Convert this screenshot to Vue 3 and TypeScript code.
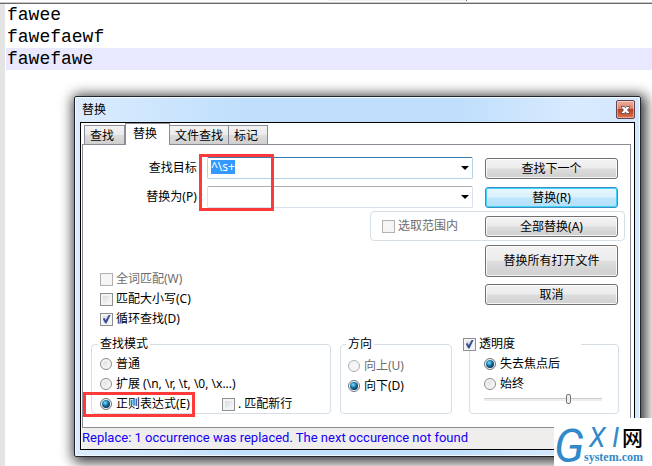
<script setup lang="ts">
import { onMounted, ref } from 'vue'

const lines = ['fawee', 'fawefaewf', 'fawefawe']
const activeLine = 2
const tabs = ['查找', '替换', '文件查找', '标记']
const activeTab = ref(1)

const findText = ref('^\\s+')
const replaceText = ref('')
const findBox = ref<HTMLInputElement | null>(null)

const options = ref([
  { id: 'whole', label: '全词匹配(W)', checked: false, disabled: true },
  { id: 'case', label: '匹配大小写(C)', checked: false, disabled: false },
  { id: 'wrap', label: '循环查找(D)', checked: true, disabled: false },
])

const modes = [
  { id: 'normal', label: '普通' },
  { id: 'extended', label: '扩展 (\\n, \\r, \\t, \\0, \\x...)' },
  { id: 'regex', label: '正则表达式(E)' },
]
const mode = ref('regex')
const newline = ref(false)
const direction = ref('down')
const transparent = ref(true)
const trigger = ref('blur')
const opacity = ref(73)

onMounted(() => {
  findBox.value?.focus()
  findBox.value?.select()
})
</script>

<template>
  <main class="editor">
    <div class="toolbar-edge"><span class="toolbar-piece"></span></div>
    <div class="code">
      <div v-for="(line, i) in lines" :key="i" class="line" :class="{ current: i === activeLine }">{{ line }}</div>
    </div>

    <section class="dialog" role="dialog" aria-labelledby="dialog-title">
      <header class="titlebar">
        <h1 id="dialog-title">替换</h1>
        <button class="close" type="button" aria-label="关闭">
          <svg viewBox="0 0 10 9" width="9" height="8">
            <path d="M0.5 0.5H3.5L5 2L6.5 0.5H9.5V2L7.3 4.5L9.5 7V8.5H6.5L5 7L3.5 8.5H0.5V7L2.7 4.5L0.5 2Z" fill="#fff" stroke="#4d4a55" />
          </svg>
        </button>
      </header>

      <div class="client">
        <nav class="tabs">
          <button v-for="(tab, i) in tabs" :key="tab" type="button" class="tab" :class="{ active: i === activeTab }" @click="activeTab = i">{{ tab }}</button>
        </nav>

        <form class="panel" @submit.prevent>
          <div class="fields">
            <label class="caption" for="find">查找目标<i>:</i></label>
            <div class="combo focus">
              <input id="find" ref="findBox" v-model="findText" type="text" spellcheck="false" autocomplete="off" />
              <button type="button" class="drop" aria-label="查找历史"><svg viewBox="0 0 8 4" width="8" height="4"><path d="M0 0H8L4 4Z" /></svg></button>
            </div>
            <button type="button" class="btn">查找下一个</button>

            <label class="caption" for="replace">替换为(P)<i>:</i></label>
            <div class="combo">
              <input id="replace" v-model="replaceText" type="text" autocomplete="off" />
              <button type="button" class="drop" aria-label="替换历史"><svg viewBox="0 0 8 4" width="8" height="4"><path d="M0 0H8L4 4Z" /></svg></button>
            </div>
            <button type="button" class="btn primary">替换(R)</button>

            <div class="scope">
              <label class="option off"><input type="checkbox" disabled />选取范围内</label>
              <button type="button" class="btn">全部替换(A)</button>
            </div>
            <div class="mark mark-fields"></div>
          </div>

          <div class="middle">
            <div class="options">
              <label v-for="o in options" :key="o.id" class="option" :class="{ off: o.disabled }">
                <input v-model="o.checked" type="checkbox" :disabled="o.disabled" />{{ o.label }}
              </label>
            </div>
            <div class="actions">
              <button type="button" class="btn tall">替换所有打开文件</button>
              <button type="button" class="btn">取消</button>
            </div>
          </div>

          <div class="groups">
            <fieldset>
              <legend>查找模式</legend>
              <div v-for="m in modes" :key="m.id" class="row">
                <label class="option"><input v-model="mode" type="radio" name="mode" :value="m.id" />{{ m.label }}</label>
                <label v-if="m.id === 'regex'" class="option newline"><input v-model="newline" type="checkbox" />. 匹配新行</label>
              </div>
              <div class="mark mark-mode"></div>
            </fieldset>

            <fieldset class="direction">
              <legend>方向</legend>
              <label class="option off"><input v-model="direction" type="radio" name="direction" value="up" disabled />向上(U)</label>
              <label class="option"><input v-model="direction" type="radio" name="direction" value="down" />向下(D)</label>
            </fieldset>

            <fieldset class="opacity">
              <legend><label class="option"><input v-model="transparent" type="checkbox" />透明度</label></legend>
              <label class="option"><input v-model="trigger" type="radio" name="trigger" value="blur" />失去焦点后</label>
              <label class="option"><input v-model="trigger" type="radio" name="trigger" value="always" />始终</label>
              <input v-model="opacity" class="slider" type="range" min="0" max="100" aria-label="透明度" />
            </fieldset>
          </div>
        </form>

        <p class="status">Replace: 1 occurrence was replaced. The next occurence not found</p>
      </div>
    </section>

    <aside class="logo">
      <span class="logo-g">G</span>
      <div class="logo-rest">
        <div class="logo-top"><span class="logo-xi">X I</span><span class="logo-net">网</span></div>
        <div class="logo-domain">system.com</div>
      </div>
    </aside>
  </main>
</template>

<style>
html, body {
  margin: 0;
  overflow: hidden;
}
</style>

<style scoped>
* {
  box-sizing: border-box;
}

.editor {
  position: relative;
  min-height: 100vh;
  overflow: hidden;
  background: linear-gradient(90deg, #e4e4e4 5px, #fff 5px);
  font: 12px/20px "Noto Sans", "Noto Sans CJK SC", sans-serif;
  color: #000;
}

.toolbar-edge {
  height: 4px;
  padding-left: 329px;
  background: #fff;
  border-bottom: 1px solid #6a6a6a;
  box-shadow: inset 0 -1px #c8c8c8;
}

.toolbar-piece {
  display: block;
  width: 138px;
  height: 1px;
  background: #f0f0f0;
  border-right: 1px solid #777;
}

.code {
  padding-left: 6px;
  font: 18px/22px "Liberation Mono", monospace;
}

.line {
  height: 22px;
  padding-left: 1px;
}

.current {
  background: #e8e8ff;
}

.dialog {
  position: absolute;
  top: 96px;
  left: 74px;
  right: 11px;
  padding: 0 5px 6px;
  border: 1px solid #20252e;
  border-radius: 2px;
  background: linear-gradient(90deg, #dcecfe, #bfdffc 30%, #bfdffc 68%, #d8eafe 88%, #d3e8fd);
  box-shadow: inset 0 0 0 1px #f2f9ff, 2px 2px 13px 3px rgba(0, 0, 0, 0.8);
}

.titlebar {
  display: flex;
  align-items: center;
  justify-content: space-between;
  height: 25px;
  padding-left: 2px;
}

.titlebar h1 {
  margin: 0;
  font: inherit;
}

.close {
  display: grid;
  place-items: center;
  width: 19px;
  height: 19px;
  padding: 0;
  border: 1px solid #5e4550;
  border-radius: 2px;
  background: linear-gradient(#eeb0a0, #dd8069 45%, #bd3c1e 50%, #d97650);
  box-shadow: inset 0 0 0 1px rgba(255, 255, 255, 0.4);
}

.client {
  border: 1px solid #000;
  background: #fff;
}

.tabs {
  display: flex;
  align-items: flex-end;
  height: 21px;
  padding-left: 3px;
}

.tab {
  height: 19px;
  padding: 0 5px;
  border: 1px solid #8b8c95;
  border-bottom: 0;
  background: linear-gradient(#f3f3f3, #ebebeb 48%, #dcdcdc 52%, #cfcfcf);
  font: inherit;
  line-height: 20px;
}

.tab + .tab {
  border-left: 0;
}

.tab:first-child {
  padding-right: 10px;
}

.tab:last-child {
  padding-right: 9px;
}

.tab.active {
  position: relative;
  z-index: 1;
  height: 22px;
  margin-bottom: -1px;
  padding: 0 12px 1px 7px;
  border-left: 1px solid #8b8c95;
  background: #fff;
}

.panel {
  margin: 0 3px 0 1px;
  padding-bottom: 13px;
  border: 1px solid #8b8c95;
}

.fields {
  position: relative;
  display: grid;
  grid-template-columns: 121px 1fr 133px;
  grid-auto-rows: 21px;
  row-gap: 8px;
  padding: 13px 12px 8px 0;
}

.caption {
  text-align: right;
}

.caption i {
  padding: 0 1px 0 3px;
  color: #79bfe8;
  font-style: normal;
}

.combo {
  display: flex;
  height: 22px;
  margin: -1px 12px 0 3px;
  border: 1px solid #d8e1ec;
  border-top-color: #abadb3;
  border-radius: 2px;
}

.combo.focus {
  border-color: #b5d2e6;
  border-top-color: #3d7bad;
}

.combo input {
  flex: 1;
  min-width: 0;
  height: 14px;
  margin-top: 2px;
  padding: 0 3px;
  border: 0;
  outline: 0;
  background: transparent;
  font: inherit;
  line-height: 14px;
}

.combo input::selection {
  background: #3399ff;
  color: #fff;
}

.drop {
  display: grid;
  place-items: center;
  width: 14px;
  padding: 0;
  border: 0;
  background: none;
}

.btn {
  height: 21px;
  padding: 0;
  border: 1px solid #707070;
  border-radius: 3px;
  background: linear-gradient(#f3f3f3, #ebebeb 48%, #dddddd 52%, #cfcfcf);
  box-shadow: inset 0 0 0 1px rgba(255, 255, 255, 0.8);
  font: inherit;
  line-height: 20px;
  color: #000;
}

.btn.primary {
  border-color: #3c8fc1;
  background: linear-gradient(#e8f6fd, #d9f0fc 48%, #bee6fd 52%, #b2e0f8);
  box-shadow: inset 0 0 0 1px #3fd3fb;
}

.scope {
  grid-column: 2 / 4;
  display: flex;
  align-items: center;
  justify-content: space-between;
  justify-self: end;
  width: 255px;
  height: 30px;
  margin: -5px -7px 0 0;
  padding: 0 6px 0 11px;
  border: 1px solid #d5dfe5;
  border-radius: 4px;
}

.scope .btn {
  width: 133px;
}

.option {
  display: flex;
  align-items: center;
  gap: 3px;
  height: 20px;
  white-space: nowrap;
}

.option.off {
  color: #6d6d6d;
}

.option input {
  display: grid;
  place-items: center;
  flex: none;
  width: 13px;
  height: 13px;
  margin: 0;
  border: 1px solid #8e8f8f;
  background: linear-gradient(135deg, #cfd3d8, #f4f4f4 75%);
  box-shadow: inset 0 0 0 2px #f4f4f4;
  appearance: none;
}

.option input:disabled {
  border-color: #b1b1b1;
  background: #f6f6f6;
}

.option input[type="checkbox"]:checked::after {
  width: 9px;
  height: 9px;
  background: #3a4f96;
  clip-path: polygon(8% 48%, 28% 40%, 42% 62%, 76% 0, 98% 0, 50% 100%, 36% 100%);
  content: "";
}

.option input[type="radio"] {
  width: 12px;
  height: 12px;
  margin-right: 1px;
  border-radius: 50%;
}

.option input[type="radio"]:checked {
  border-color: #6b7780;
  background: #f4f4f4;
}

.option input[type="radio"]:checked::after {
  width: 8px;
  height: 8px;
  border-radius: 50%;
  background: radial-gradient(circle at 40% 35%, #8fe0fa, #1c84b4 35%, #0b2c4c 75%);
  content: "";
}

.middle {
  display: flex;
  justify-content: space-between;
  padding: 0 12px 0 17px;
}

.options {
  padding-top: 24px;
}

.actions {
  display: flex;
  flex-direction: column;
  gap: 7px;
  width: 133px;
}

.btn.tall {
  height: 32px;
}

.groups {
  display: grid;
  grid-template-columns: 240fr 112fr 158fr;
  column-gap: 9px;
  padding: 8px 11px 0 8px;
}

fieldset {
  position: relative;
  min-width: 0;
  height: 77px;
  margin: 0;
  padding: 3px 0 0 8px;
  border: 1px solid #d5dfe5;
  border-radius: 4px;
}

legend {
  height: 14px;
  margin-left: -2px;
  padding: 0 2px;
  line-height: 14px;
}

.row {
  display: flex;
  gap: 32px;
}

.direction {
  padding: 5px 0 0 7px;
}

.opacity {
  margin-left: 8px;
  padding-left: 14px;
}

.opacity legend {
  width: 120px;
  margin-left: -23px;
  background: #fff;
}

.opacity legend .option {
  height: 14px;
}

.slider {
  display: block;
  width: calc(100% - 16px);
  height: 10px;
  margin: 0;
  background: linear-gradient(#b3b3b3, #e9eeee 1px) center / 100% 3px no-repeat;
  appearance: none;
}

.slider::-webkit-slider-thumb {
  width: 5px;
  height: 10px;
  border: 1px solid #777;
  border-radius: 2px;
  background: #eee;
  appearance: none;
}

.mark {
  position: absolute;
  border: 3px solid #fc3a3a;
  pointer-events: none;
}

.mark-fields {
  top: 9px;
  left: 116px;
  width: 75px;
  height: 57px;
}

.mark-mode {
  bottom: -4px;
  left: -9px;
  width: 112px;
  height: 25px;
}

.status {
  height: 21px;
  margin: 0 0 0 1px;
  background: #f0eded;
  color: #1400f5;
  font: 13px/20px Roboto, "Noto Sans CJK SC", sans-serif;
  white-space: nowrap;
}

.logo {
  position: absolute;
  right: 0;
  bottom: 0;
  display: flex;
  width: 98px;
  height: 48px;
  background: #fff;
  color: #3289c9;
}

.logo-g {
  width: 30px;
  font: italic 46px/56px Roboto, sans-serif;
}

.logo-rest {
  padding-top: 6px;
}

.logo-top {
  display: flex;
  height: 26px;
  padding-left: 5px;
}

.logo-xi {
  width: 33px;
  font: italic 27px/28px Roboto, sans-serif;
  white-space: nowrap;
}

.logo-net {
  color: #000;
  font: 500 21px/24px "Noto Sans CJK SC", sans-serif;
}

.logo-domain {
  font: bold 12px/14px "Liberation Serif", serif;
}
</style>
